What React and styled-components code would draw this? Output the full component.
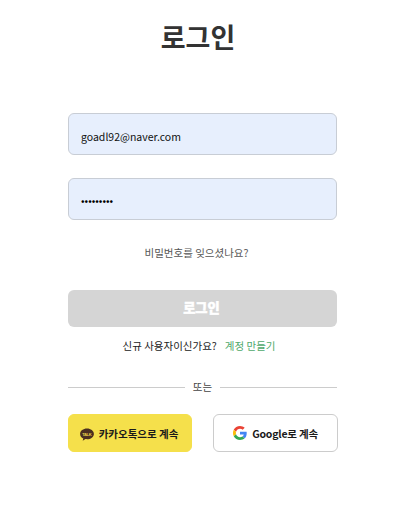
import React, { useState } from 'react';
import styled, { createGlobalStyle } from 'styled-components';

const GlobalStyle = createGlobalStyle`
  * {
    box-sizing: border-box;
  }
  body {
    margin: 0;
    background-color: #fff;
    font-family: "Noto Sans CJK KR", "Noto Sans", sans-serif;
  }
`;

const Page = styled.main`
  width: 420px;
  height: 519px;
  padding: 17px 83px 0 68px;
  overflow: hidden;
  display: flex;
  flex-direction: column;
`;

const Title = styled.h1`
  margin: 0 9px 56px 0;
  font-size: 27px;
  line-height: 40px;
  font-weight: 700;
  color: #333;
  text-align: center;
`;

const Form = styled.form`
  display: flex;
  flex-direction: column;
`;

const Input = styled.input`
  width: 100%;
  height: 42px;
  margin: 0 0 23px;
  padding: 4px 12px 0;
  border: 1px solid #c8cdd5;
  border-radius: 6px;
  background-color: #e7effd;
  color: #111;
  font-family: inherit;
  font-size: 10.5px;
  outline: none;

  &[type='password'] {
    padding-top: 2px;
    color: #000;
  }
`;

const FindPassword = styled.a`
  margin: 1px 12px 28px 0;
  font-size: 10.5px;
  line-height: 18px;
  color: #555;
  text-align: center;
`;

const LoginButton = styled.button`
  height: 37px;
  padding: 0 2px 2px 0;
  border: none;
  border-radius: 6px;
  background-color: #d5d5d5;
  color: #fff;
  font-family: inherit;
  font-size: 13.3px;
  font-weight: 900;
  -webkit-text-stroke: 0.4px #fff;
`;

const SignUp = styled.p`
  margin: 10px 7px 0 0;
  display: flex;
  justify-content: center;
  gap: 8px;
  font-size: 10.5px;
  line-height: 18px;
  color: #222;
`;

const SignUpLink = styled.a`
  color: #4fa96b;
`;

const Divider = styled.div`
  margin: 23px 0 18px;
  display: flex;
  align-items: center;
  gap: 8px;
  font-size: 10.5px;
  line-height: 18px;
  color: #444;

  &::before,
  &::after {
    content: '';
    flex: 1;
    height: 1px;
    background-color: #ccc;
  }
`;

const SocialRow = styled.div`
  width: 270px;
  display: flex;
  justify-content: space-between;
`;

const SocialButton = styled.button`
  width: ${({ $kakao }) => ($kakao ? 124 : 125)}px;
  height: 38px;
  padding: ${({ $kakao }) => ($kakao ? '0 2px 0 0' : '0')};
  display: flex;
  align-items: center;
  justify-content: center;
  gap: 5px;
  border: 1px solid ${({ $kakao }) => ($kakao ? '#f5e04b' : '#ccc')};
  border-radius: 6px;
  background-color: ${({ $kakao }) => ($kakao ? '#f5e04b' : '#fff')};
  color: #1a1a1a;
  font-family: inherit;
  font-size: 10.5px;
  font-weight: 700;
  letter-spacing: ${({ $kakao }) => ($kakao ? 'normal' : '-0.2px')};
`;

const KakaoSvg = styled.svg`
  margin-top: 3px;
`;

const KakaoIcon = () => (
  <KakaoSvg width="14" height="13" viewBox="0 0 14 13">
    <path
      d="M7 .5C3.2.5.1 2.900.1 5.900c0 1.900 1.300 3.600 3.200 4.600l-.6 2.200 2.800-1.600c.5.1 1 .1 1.500.1 3.800 0 6.900-2.400 6.900-5.300S10.800.5 7 .5z"
      fill="#4a2f20"
    />
    <text
      x="7"
      y="7.500"
      textAnchor="middle"
      textLength="9.500"
      fontFamily="Liberation Sans, sans-serif"
      fontSize="4.200"
      fontWeight="700"
      fill="#e3cd48"
    >
      TALK
    </text>
  </KakaoSvg>
);

const GoogleIcon = () => (
  <svg width="14" height="14" viewBox="0 0 48 48">
    <path fill="#EA4335" d="M24 9.5c3.540 0 6.710 1.220 9.210 3.600l6.850-6.850C35.900 2.380 30.470 0 24 0 14.620 0 6.510 5.380 2.560 13.220l7.980 6.190C12.430 13.720 17.740 9.500 24 9.500z" />
    <path fill="#4285F4" d="M46.980 24.550c0-1.570-.15-3.090-.38-4.550H24v9.020h12.940c-.58 2.960-2.260 5.480-4.780 7.180l7.730 6c4.510-4.180 7.090-10.360 7.090-17.650z" />
    <path fill="#FBBC05" d="M10.530 28.590c-.48-1.450-.76-2.990-.76-4.590s.27-3.140.76-4.590l-7.980-6.190C.92 16.460 0 20.120 0 24s.92 7.540 2.560 10.780l7.970-6.190z" />
    <path fill="#34A853" d="M24 48c6.480 0 11.930-2.130 15.890-5.810l-7.730-6c-2.150 1.450-4.920 2.300-8.160 2.300-6.260 0-11.570-4.220-13.470-9.910l-7.980 6.190C6.510 42.620 14.620 48 24 48z" />
  </svg>
);

const Login = () => {
  const [email, setEmail] = useState('goadl92@naver.com');
  const [password, setPassword] = useState('password1');

  return (
    <Page>
      <GlobalStyle />
      <Title>로그인</Title>
      <Form onSubmit={(e) => e.preventDefault()}>
        <Input type="email" value={email} onChange={(e) => setEmail(e.target.value)} />
        <Input type="password" value={password} onChange={(e) => setPassword(e.target.value)} />
        <FindPassword>비밀번호를 잊으셨나요?</FindPassword>
        <LoginButton type="submit">로그인</LoginButton>
      </Form>
      <SignUp>
        신규 사용자이신가요?
        <SignUpLink>계정 만들기</SignUpLink>
      </SignUp>
      <Divider>또는</Divider>
      <SocialRow>
        <SocialButton type="button" $kakao>
          <KakaoIcon />
          카카오톡으로 계속
        </SocialButton>
        <SocialButton type="button">
          <GoogleIcon />
          Google로 계속
        </SocialButton>
      </SocialRow>
    </Page>
  );
};

export default Login;
